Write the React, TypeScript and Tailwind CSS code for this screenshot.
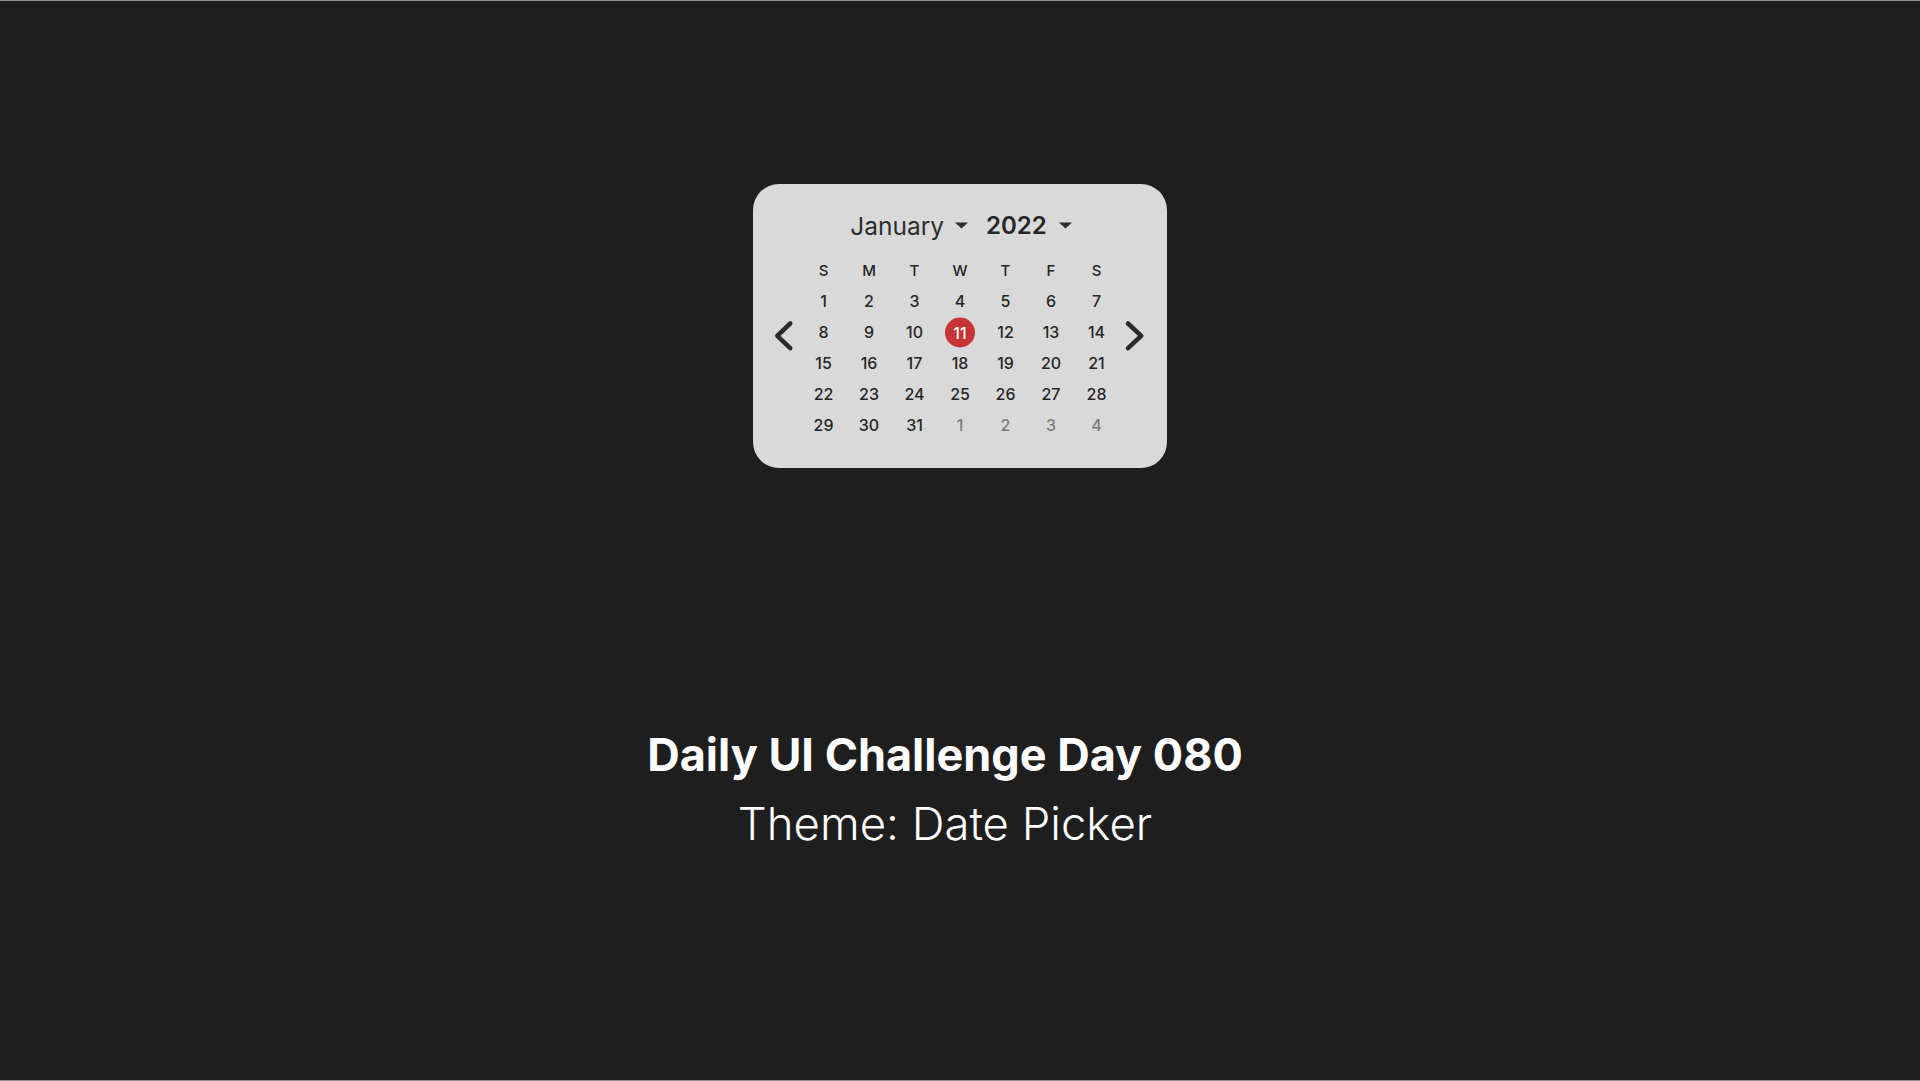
import React from "react";

const rows: { n: number; muted?: boolean; sel?: boolean }[][] = [
  [1, 2, 3, 4, 5, 6, 7].map((n) => ({ n })),
  [8, 9, 10, 11, 12, 13, 14].map((n) => ({ n, sel: n === 11 })),
  [15, 16, 17, 18, 19, 20, 21].map((n) => ({ n })),
  [22, 23, 24, 25, 26, 27, 28].map((n) => ({ n })),
  [
    { n: 29 },
    { n: 30 },
    { n: 31 },
    { n: 1, muted: true },
    { n: 2, muted: true },
    { n: 3, muted: true },
    { n: 4, muted: true },
  ],
];

const heads = ["S", "M", "T", "W", "T", "F", "S"];

function Caret() {
  return (
    <svg width="13" height="7" viewBox="0 0 13 7" className="block">
      <path d="M0 0.5 L13 0.5 L6.5 6.5 Z" fill="#2b2b2b" />
    </svg>
  );
}

function Chevron({ dir }: { dir: "l" | "r" }) {
  const pts = dir === "l" ? "17.25,6.5 4.25,18.8 17.25,31.2" : "9,6.5 22.25,18.8 9,31.2";
  return (
    <svg width="28" height="31" viewBox="0 0 28 31" className="block overflow-visible">
      <polyline
        points={pts}
        fill="none"
        stroke="#2a2a2a"
        strokeWidth="4.5"
        strokeLinecap="round"
        strokeLinejoin="round"
      />
    </svg>
  );
}

export default function App() {
  const font = { fontFamily: 'Inter, "Noto Sans", sans-serif' };
  return (
    <div className="w-full h-[1081px] bg-[#1e1e1e] border-t border-b border-[#8e8e8e] flex flex-col items-center overflow-hidden">
      <div
        className="mt-[183px] w-[414px] h-[284px] rounded-[26px] bg-[#d9d9d9] flex flex-col items-center pt-[24.5px]"
        style={font}
      >
        <div className="flex items-center h-[34px] ml-[2px]">
          <span className="text-[24.5px] leading-[34px] font-normal text-[#2e2e2e]">January</span>
          <span className="ml-[11px]">
            <Caret />
          </span>
          <span className="ml-[18px] text-[24px] leading-[34px] font-semibold text-[#262626]">2022</span>
          <span className="ml-[12px]">
            <Caret />
          </span>
        </div>
        <div className="mt-[12px] grid grid-cols-[28px_repeat(7,45.5px)_28px]">
          <div className="h-[31px]" />
          {heads.map((h, i) => (
            <div
              key={"h" + i}
              className="h-[31px] flex items-center justify-center text-[15px] leading-[31px] font-medium text-[#262626]"
            >
              {h}
            </div>
          ))}
          <div className="h-[31px]" />
          {rows.map((row, r) => (
            <React.Fragment key={"r" + r}>
              <div className="h-[31px] flex items-start justify-start">
                {r === 1 ? <Chevron dir="l" /> : null}
              </div>
              {row.map((c, i) => (
                <div
                  key={"c" + r + "-" + i}
                  className="h-[31px] flex items-center justify-center text-[16px] leading-[31px] font-medium"
                >
                  {c.sel ? (
                    <span className="w-[30px] h-[30px] rounded-full bg-[#c73434] text-white flex items-center justify-center translate-y-[0.5px]">
                      {c.n}
                    </span>
                  ) : (
                    <span className={c.muted ? "text-[#7b7b7b]" : "text-[#262626]"}>{c.n}</span>
                  )}
                </div>
              ))}
              <div className="h-[31px] flex items-start justify-start">
                {r === 1 ? <Chevron dir="r" /> : null}
              </div>
            </React.Fragment>
          ))}
        </div>
      </div>
      <div
        className="mt-[259px] w-full flex flex-col items-center pr-[30px] text-white"
        style={{ fontFamily: 'Inter, "Noto Sans", sans-serif' }}
      >
        <div className="text-[45px] leading-[56px] font-bold">Daily UI Challenge Day 080</div>
        <div className="mt-[13px] text-[45.5px] leading-[56px] font-light">Theme: Date Picker</div>
      </div>
    </div>
  );
}
